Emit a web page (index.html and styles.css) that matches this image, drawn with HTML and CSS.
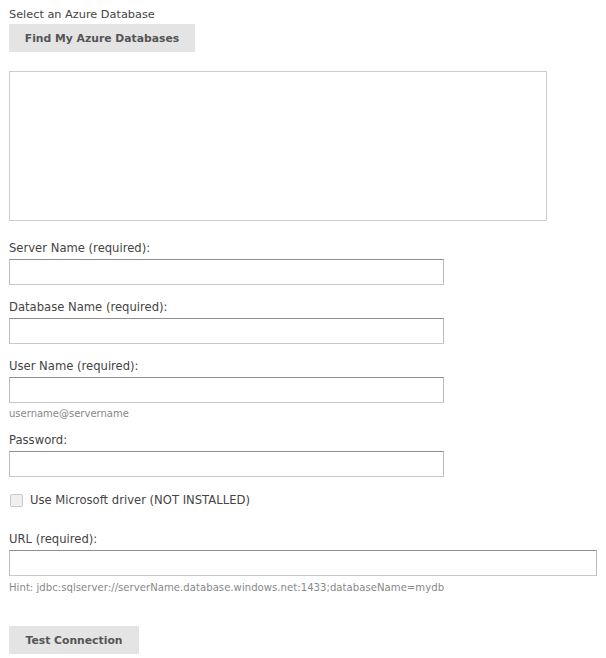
FILE: index.html
```html
<!DOCTYPE html>
<html>
<head>
<meta charset="utf-8">
<link rel="stylesheet" href="styles.css">
</head>
<body>
<div class="page">
  <div class="title">Select an Azure Database</div>
  <button class="btn btn-find" type="button">Find My Azure Databases</button>
  <div class="listbox"></div>

  <div class="field field-first">
    <label class="label">Server Name (required):</label>
    <input class="input" type="text">
  </div>
  <div class="field">
    <label class="label">Database Name (required):</label>
    <input class="input" type="text">
  </div>
  <div class="field">
    <label class="label">User Name (required):</label>
    <input class="input" type="text">
    <div class="hint hint-user">username@servername</div>
  </div>
  <div class="field field-pass">
    <label class="label">Password:</label>
    <input class="input" type="password">
  </div>
  <div class="check-row">
    <span class="checkbox"></span>
    <span class="check-label">Use Microsoft driver (NOT INSTALLED)</span>
  </div>
  <div class="field field-url">
    <label class="label">URL (required):</label>
    <input class="input input-wide" type="text">
    <div class="hint hint-url">Hint: jdbc:sqlserver://serverName.database.windows.net:1433;databaseName=mydb</div>
  </div>
  <button class="btn btn-test" type="button">Test Connection</button>
</div>
</body>
</html>
```
FILE: styles.css
```css
html, body {
  margin: 0;
  padding: 0;
  background: #ffffff;
}
body {
  font-family: "DejaVu Sans", Verdana, sans-serif;
  font-size: 11.6px;
  color: #444444;
}
.page {
  display: flex;
  flex-direction: column;
  align-items: flex-start;
  padding: 7px 0 0 9px;
}
.title {
  font-size: 11.3px;
  line-height: 15px;
  height: 15px;
}
.btn {
  font-family: "DejaVu Sans", Verdana, sans-serif;
  font-size: 10.8px;
  font-weight: bold;
  color: #555555;
  background: #e4e4e4;
  border: none;
  height: 28px;
  padding: 0;
  margin: 0;
  white-space: nowrap;
  text-align: center;
}
.btn-find {
  margin-top: 2px;
  width: 186px;
}
.listbox {
  margin-top: 19px;
  width: 538px;
  height: 150px;
  box-sizing: border-box;
  border: 1px solid #cccccc;
}
.field {
  display: flex;
  flex-direction: column;
  margin-top: 14px;
}
.field-first {
  margin-top: 19px;
}
.field-pass {
  margin-top: 11px;
}
.field-url {
  margin-top: 23px;
}
.label {
  line-height: 16px;
  height: 16px;
}
.input {
  margin: 3px 0 0 0;
  width: 435px;
  height: 26px;
  box-sizing: border-box;
  border: 1px solid #bcbcbc;
  border-top-color: #8e8e8e;
  border-bottom-color: #c8c8c8;
  padding: 0 4px;
  background: #ffffff;
  outline: none;
}
.input-wide {
  width: 588px;
}
.hint {
  font-size: 10px;
  color: #888888;
  line-height: 14px;
  height: 14px;
  white-space: nowrap;
}
.hint-user {
  margin-top: 4px;
}
.hint-url {
  margin-top: 5px;
  font-size: 10.1px;
  letter-spacing: 0.03px;
}
.check-row {
  display: flex;
  align-items: center;
  margin-top: 15px;
  height: 16px;
}
.checkbox {
  width: 11px;
  height: 11px;
  margin-left: 1px;
  border: 1px solid #c8c8c8;
  border-radius: 2px;
  background: #f0f0f0;
}
.check-label {
  margin-left: 7px;
  line-height: 16px;
}
.btn-test {
  margin-top: 31px;
  width: 130px;
}
```
